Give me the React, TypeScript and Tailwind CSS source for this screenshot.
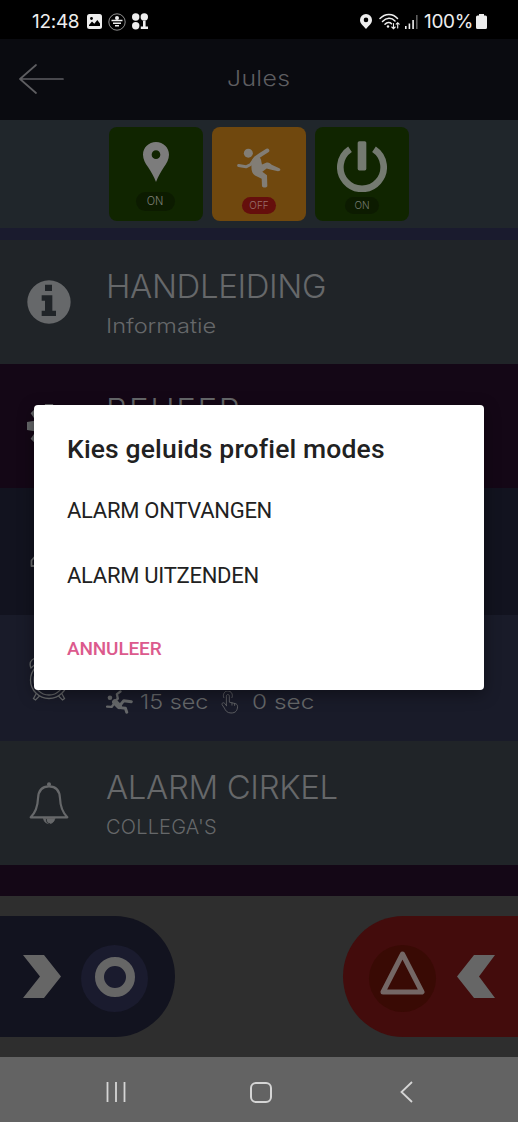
import React, { ReactNode } from 'react';
import { clsx } from 'clsx';

interface MenuRowProps {
  icon: ReactNode;
  title?: string;
  subtitle?: ReactNode;
  titleClass?: string;
  subtitleClass?: string;
  className: string;
}

const MODES = [
  { id: 'receive', label: 'ALARM ONTVANGEN' },
  { id: 'send', label: 'ALARM UITZENDEN' },
];

const GEAR_TEETH = [0, 45, 90, 135, 180, 225, 270, 315];

function SlipIcon({ className }: { className: string }) {
  return (
    <svg viewBox="410 86 132 122" className={className} fill="none" stroke="currentColor" strokeLinecap="round" strokeLinejoin="round">
      <circle cx="444" cy="104" r="13.500" fill="currentColor" stroke="none" />
      <path d="M466 119 L482 108 L501 96" strokeWidth="12" />
      <path d="M461 123 L451 138 L437 145 L415 141" strokeWidth="9" />
      <path d="M456 124 C463 107 483 113 483 129 L485 138 L499 132 C506 131 510 134 514 139 L537 149 C543 153 540 158 533 158 L510 153 L499 150 L486 160 L500 170 L501 203 C499 208 487 208 485 203 L484 181 L464 171 C452 164 451 145 456 124Z" fill="currentColor" stroke="none" />
    </svg>
  );
}

function RunIcon({ className }: { className: string }) {
  return (
    <svg viewBox="317 148 82 72" className={className} fill="none" stroke="currentColor" strokeLinecap="round" strokeLinejoin="round">
      <circle cx="329" cy="171" r="7" fill="currentColor" stroke="none" />
      <path d="M341 184 L353 174 L350 160 L361 152" strokeWidth="7" />
      <path d="M320 198 L334 199 L343 187" strokeWidth="7" />
      <path d="M344 184 L357 197" strokeWidth="17" />
      <path d="M358 196 L371 180 L394 183" strokeWidth="9" />
      <path d="M359 201 L376 203 L380 215" strokeWidth="9" />
    </svg>
  );
}

function PinIcon({ className }: { className: string }) {
  return (
    <svg viewBox="0 0 78 120" className={className} fill="currentColor">
      <path fillRule="evenodd" d="M39 0C17 0 0 17 0 38c0 14 7 25 15 37 9 14 18 29 24 45 6-16 15-31 24-45 8-12 15-23 15-37C78 17 61 0 39 0Zm0 25a13 13 0 1 1 0 26 13 13 0 0 1 0-26Z" />
    </svg>
  );
}

function PowerIcon() {
  return (
    <svg viewBox="0 0 150 152" className="mt-[14px] w-[50px] h-[51px] shrink-0" fill="none" stroke="currentColor">
      <path d="M39 24 A65 65 0 1 0 111 24" strokeWidth="20" />
      <rect x="62" y="0" width="26" height="88" rx="5" fill="currentColor" stroke="none" />
    </svg>
  );
}

function InfoIcon() {
  return (
    <svg viewBox="81 135 132 132" className="w-11 h-11" fill="currentColor">
      <path fillRule="evenodd" d="M147 136a65 65 0 1 0 0 130 65 65 0 0 0 0-130ZM135 149h21v19h-21ZM125 181h32v46h11v16h-43v-16h10v-30h-10Z" />
    </svg>
  );
}

function GearIcon() {
  return (
    <svg viewBox="0 0 44 44" className="w-11 h-11" fill="currentColor">
      {GEAR_TEETH.map((angle) => (
        <path key={angle} d="M18 0h8l1.500 9h-11Z" transform={`rotate(${angle} 22 22)`} />
      ))}
      <circle cx="22" cy="22" r="11.500" fill="none" stroke="currentColor" strokeWidth="8" />
    </svg>
  );
}

function WarningIcon() {
  return (
    <svg viewBox="0 0 38 46" className="w-[38px] h-[46px] -translate-y-[7px]" fill="none" stroke="currentColor" strokeWidth="1.800" strokeLinejoin="round">
      <path d="M1.500 38.500L5 34.500V24.500L19 2l14 22.500v10l3.500 4V44h-35Z" />
    </svg>
  );
}

function AlarmClockIcon() {
  return (
    <svg viewBox="0 0 40 46" className="w-10 h-[46px]" fill="none" stroke="currentColor" strokeWidth="1.3" strokeLinecap="round">
      <circle cx="20" cy="25" r="18.5" />
      <circle cx="20" cy="25" r="15" />
      <path d="M20 14v11l6 4" />
      <path d="M2 13C-1 6 5 1 11 5L2 13ZM38 13C41 6 35 1 29 5L38 13Z" />
      <path d="M7 39l-2.500 4.500 2 1.500 4-4M33 39l2.500 4.500-2 1.500-4-4" />
    </svg>
  );
}

function BellIcon() {
  return (
    <svg viewBox="0 0 120 132" className="w-10 h-11 translate-y-px" fill="none" stroke="currentColor" strokeLinecap="round" strokeLinejoin="round">
      <circle cx="60" cy="7" r="6" fill="currentColor" stroke="none" />
      <path d="M60 13C38 13 28 28 27 49 26 76 20 91 5 106H115C100 91 94 76 93 49 92 28 82 13 60 13Z" strokeWidth="6.500" />
      <path d="M43 109a18 21 0 0 0 35 0Z" fill="currentColor" strokeWidth="2" />
      <path d="M52 112c-1 8 4 13 10 13" stroke="#202428" strokeWidth="2.500" />
    </svg>
  );
}

function TouchIcon() {
  return (
    <svg viewBox="0 0 54 70" className="w-[18px] h-[23px]" fill="none" stroke="currentColor" strokeWidth="2.500" strokeLinecap="round" strokeLinejoin="round">
      <path d="M8 20a14 14 0 1 1 25 0" />
      <path d="M16 45V16c0-7 9-7 9 0v18l17 4c6 1 8 5 8 10-1 11-5 19-20 19-12 0-17-8-20-15L3 42c-2-5 4-9 8-4l5 6" />
      <path d="M33 36v7M41 38v6" />
    </svg>
  );
}

function MenuRow({ icon, title, subtitle, titleClass, subtitleClass, className }: MenuRowProps) {
  return (
    <div className={clsx('flex shrink-0 text-[#66686a]', className)}>
      <div className="w-[97px] shrink-0 flex items-center justify-center">{icon}</div>
      <div className="pl-[9px] pt-[26px] whitespace-nowrap">
        <p className={clsx('h-10 leading-10 text-[33px] font-light', titleClass)}>{title}</p>
        <div className={clsx('h-10 leading-[41px] text-[20px] font-light', subtitleClass)}>{subtitle}</div>
      </div>
    </div>
  );
}

function StatusBar() {
  return (
    <div className="h-[39px] shrink-0 bg-black text-[#eeeeee] flex items-center pt-1 pl-8 pr-[31px] font-['Inter']">
      <span className="text-[19px] leading-5 w-[48px] tracking-[-0.3px]">12:48</span>
      <svg viewBox="0 0 15 15" className="ml-[7px] w-[15px] h-[15px]">
        <rect width="15" height="15" rx="2.500" fill="currentColor" />
        <path d="M2 11l3-3.500 2.300 2.200L10.300 6 13 9.500V12H2Z" fill="#000" />
        <circle cx="4.500" cy="4.500" r="1.400" fill="#000" />
      </svg>
      <svg viewBox="0 0 18 18" className="ml-[6px] w-[18px] h-[18px]" fill="none" stroke="currentColor">
        <circle cx="9" cy="9" r="8.200" strokeWidth=".6" />
        <path d="M3.500 7.500h11M5 10.200h8M7 12.700h4" strokeWidth="1.500" />
        <circle cx="9" cy="5" r="2" fill="currentColor" stroke="none" />
      </svg>
      <svg viewBox="0 0 16 17" className="ml-[6px] w-4 h-[17px]" fill="currentColor">
        <circle cx="3.700" cy="4" r="3.700" />
        <circle cx="12.300" cy="4" r="3.700" />
        <circle cx="3.700" cy="12.700" r="3.700" />
        <path d="M11 8h2.600v5.500H16V16H8.800v-2.500H11Z" />
      </svg>
      <div className="flex-1" />
      <svg viewBox="0 0 12 15" className="w-3 h-[15px]" fill="currentColor">
        <path fillRule="evenodd" d="M6 0a6 6 0 0 0-6 6c0 3.500 3 5.500 6 9 3-3.500 6-5.500 6-9a6 6 0 0 0-6-6Zm0 3.600a2.300 2.300 0 1 1 0 4.600 2.300 2.300 0 0 1 0-4.600Z" />
      </svg>
      <svg viewBox="0 0 21 17" className="ml-[7px] w-[21px] h-[17px]" fill="none" stroke="currentColor" strokeWidth="1.500" strokeLinecap="round">
        <path d="M1 5.500C6 0 14 0 18.500 5.500M3.500 8.500C7.500 4.300 12.500 4.300 16 8M6 11.200c2-2.200 5-2.200 6.500-.5" />
        <circle cx="9" cy="13.500" r="1.200" fill="currentColor" stroke="none" />
        <path d="M14.500 10.500v5M12.800 14l1.700 1.700 1.700-1.700M18.700 15v-5M17.200 11.200l1.500-1.500 1.500 1.500" strokeWidth="1.100" />
      </svg>
      <svg viewBox="0 0 13 14" className="ml-[5px] w-[13px] h-[14px]" fill="currentColor">
        <path d="M0 11h1.600v3H0zM3.600 8.500h1.600V14H3.600zM7.300 5h1.600v9H7.300z" />
        <path d="M11 0h1.600v14H11z" opacity=".4" />
      </svg>
      <span className="ml-[6px] text-[19px] leading-5 w-[50px] tracking-[-0.3px] whitespace-nowrap">100%</span>
      <svg viewBox="0 0 11 15" className="ml-[2px] w-[11px] h-[15px]" fill="currentColor">
        <path d="M3 0h5v1.500h1.500Q11 1.500 11 3v10.500Q11 15 9.500 15h-8Q0 15 0 13.500V3Q0 1.500 1.500 1.500H3Z" />
      </svg>
    </div>
  );
}

export default function App() {
  return (
    <div className="relative w-[518px] h-[1122px] overflow-hidden flex flex-col bg-[#2e2e2e] font-['Inter']">
      <StatusBar />

      {/* Header */}
      <header className="h-[81px] shrink-0 bg-[#0a0b10] flex items-center text-[#5e5e61]">
        <svg viewBox="0 0 45 30" className="ml-[19px] -mt-0.5 w-[45px] h-[30px]" fill="none" stroke="currentColor" strokeWidth="1.700" strokeLinecap="round" strokeLinejoin="round">
          <path d="M17 1L1 15l16 14M1 15h43" />
        </svg>
        <h1 className="ml-[163px] text-[21px] font-light tracking-[0.300px] -mt-px origin-left scale-x-[1.180]">Jules</h1>
      </header>

      {/* Sensor toggles */}
      <div className="h-[108px] shrink-0 bg-[#20262b] flex justify-center gap-[9px] pt-[7px] text-[#7e8078]">
        <div className="w-[94px] h-[94px] rounded-lg bg-[#102500] flex flex-col items-center">
          <PinIcon className="mt-[15px] w-[26px] h-10 text-[#7c7c7c]" />
          <span className="mt-[10px] -ml-0.5 w-[39px] h-[19px] rounded-full bg-[#0c1b00] text-[11px] font-light leading-[19px] text-center">ON</span>
        </div>
        <div className="w-[94px] h-[94px] rounded-lg bg-[#70480e] flex flex-col items-center">
          <SlipIcon className="mt-[20px] w-11 h-[41px] text-[#827d75]" />
          <span className="mt-[9px] w-[34px] h-[17px] rounded-full bg-[#650f0c] text-[#99706c] text-[10px] font-light leading-[17px] text-center">OFF</span>
        </div>
        <div className="w-[94px] h-[94px] rounded-lg bg-[#102500] flex flex-col items-center text-[#747a70]">
          <PowerIcon />
          <span className="mt-[5px] w-[34px] h-[17px] rounded-full bg-[#0c1b00] text-[10px] font-light leading-[17px] text-center">ON</span>
        </div>
      </div>
      <div className="h-3 shrink-0 bg-[#1a1b2e]" />

      {/* Menu */}
      <MenuRow
        className="h-[124px] bg-[#202428]"
        icon={<InfoIcon />}
        title="HANDLEIDING"
        subtitle="Informatie"
        titleClass="tracking-[-0.380px]"
        subtitleClass="origin-left scale-x-[1.180]"
      />
      <MenuRow className="h-[124px] bg-[#140716]" icon={<GearIcon />} title="BEHEER" titleClass="tracking-[1.600px]" />
      <MenuRow className="h-[127px] bg-[#12131f]" icon={<WarningIcon />} />
      <MenuRow
        className="h-[126px] bg-[#191b29]"
        icon={<AlarmClockIcon />}
        subtitle={
          <div className="flex items-center h-[42px]">
            <RunIcon className="w-[27px] h-6" />
            <span className="ml-[7px] w-[70px] origin-left scale-x-[1.170]">15 sec</span>
            <span className="ml-[11px]"><TouchIcon /></span>
            <span className="ml-[13px] origin-left scale-x-[1.220]">0 sec</span>
          </div>
        }
      />
      <MenuRow
        className="h-[124px] bg-[#202428]"
        icon={<BellIcon />}
        title="ALARM CIRKEL"
        subtitle="COLLEGA'S"
        titleClass="tracking-[-0.380px]"
        subtitleClass="tracking-[0.200px]"
      />
      <div className="h-[31px] shrink-0 bg-[#140716]" />

      {/* Slide actions */}
      <div className="h-[161px] shrink-0 flex items-center justify-between text-[#666666]">
        <div className="w-[175px] h-[121px] rounded-r-full bg-[#12131f] flex items-center">
          <svg viewBox="0 0 38 43" className="ml-[23px] w-[38px] h-[43px]" fill="currentColor">
            <path d="M0 0h21l17 21.500L21 43H0l17-21.500Z" />
          </svg>
          <div className="ml-[20px] mt-[3px] w-[67px] h-[67px] rounded-full bg-[#1a1b2e] flex items-center justify-center">
            <div className="-mt-[3px] w-10 h-10 rounded-full border-[9px] border-[#666666]" />
          </div>
        </div>
        <div className="w-[175px] h-[121px] rounded-l-full bg-[#430c0c] flex items-center">
          <div className="ml-[26px] mt-[3px] w-[67px] h-[67px] rounded-full bg-[#390a04] flex items-center justify-center">
            <svg viewBox="0 0 45 44" className="-mt-[11px] w-[45px] h-[44px]" fill="none" stroke="#746765" strokeWidth="5" strokeLinejoin="round">
              <path d="M22.500 3L42 41H3Z" />
            </svg>
          </div>
          <svg viewBox="0 0 38 43" className="ml-[21px] w-[38px] h-[43px]" fill="currentColor">
            <path d="M38 0H17L0 21.500 17 43h21L22 21.500Z" />
          </svg>
        </div>
      </div>

      {/* Android navigation */}
      <div className="h-[65px] shrink-0 bg-[#636363] text-[#d5d5d5] flex items-center pt-[5px]">
        <svg viewBox="0 0 20 20" className="ml-[106px] w-5 h-5" fill="none" stroke="currentColor" strokeWidth="1.800">
          <path d="M1.500 0v20M10 0v20M18.500 0v20" />
        </svg>
        <div className="ml-[124px] w-[22px] h-[21px] rounded-[6px] border-2 border-[#d5d5d5]" />
        <svg viewBox="0 0 13 22" className="ml-[128px] w-[13px] h-[22px]" fill="none" stroke="currentColor" strokeWidth="1.800">
          <path d="M12 1L1.500 11 12 21" />
        </svg>
      </div>

      {/* Dialog */}
      <div className="absolute left-[34px] top-[405px] w-[450px] h-[285px] rounded-[4px] bg-white px-[33px] text-[#212121] font-['Roboto'] shadow-[0_4px_16px_rgba(0,0,0,0.4)]">
        <h2 className="mt-[28px] h-8 leading-8 text-[26.500px] font-medium tracking-[0.140px] whitespace-nowrap">Kies geluids profiel modes</h2>
        <ul className="mt-[13px]">
          {MODES.map((mode) => (
            <li key={mode.id} className="h-[65px] leading-[65px] text-[22px] tracking-[-0.280px]">
              {mode.label}
            </li>
          ))}
        </ul>
        <button className="mt-[29px] h-6 leading-6 block text-[19px] font-medium tracking-[-0.150px] text-[#dc5a8d]">ANNULEER</button>
      </div>
    </div>
  );
}
